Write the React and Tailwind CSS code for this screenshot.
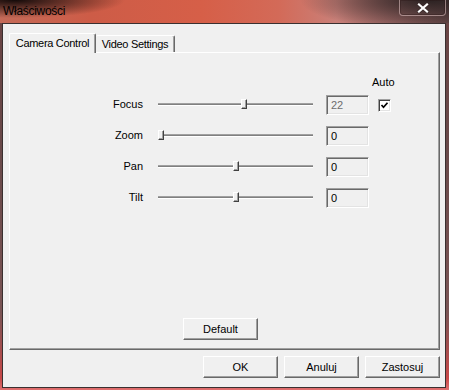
import React from "react";

function Btn({ children, className = "" }) {
  return (
    <div
      className={`h-[22px] w-[75px] flex items-center justify-center bg-[#f0f0f0] border border-t-white border-l-white border-r-[#696969] border-b-[#696969] shadow-[inset_-1px_-1px_0_#a0a0a0] text-[11px] leading-none text-black ${className}`}
    >
      {children}
    </div>
  );
}

function Slider({ thumb }) {
  return (
    <div className="relative w-[155px] h-[20px] shrink-0">
      <div className="absolute left-0 right-0 top-[8px] h-[3px] bg-[#808080] border-t border-t-[#a0a0a0] border-b border-b-white" />
      <div
        className={`absolute top-[4px] w-[6px] h-[10px] bg-[#f0f0f0] border border-t-white border-l-white border-r-[#404040] border-b-[#404040] shadow-[inset_-1px_-1px_0_#a0a0a0] ${thumb}`}
      />
    </div>
  );
}

function Field({ value, muted }) {
  return (
    <div
      className={`w-[43px] h-[20px] shrink-0 border border-t-[#a0a0a0] border-l-[#a0a0a0] border-r-white border-b-white shadow-[inset_1px_1px_0_#696969,inset_-1px_-1px_0_#e3e3e3] bg-[#f0f0f0] flex items-center pl-[4px] text-[11px] leading-none ${muted ? "text-[#6d6d6d]" : "text-black"}`}
    >
      {value}
    </div>
  );
}

function Check() {
  return (
    <div className="w-[13px] h-[13px] shrink-0 bg-white border border-t-[#a0a0a0] border-l-[#a0a0a0] border-r-white border-b-white shadow-[inset_1px_1px_0_#404040,inset_-1px_-1px_0_#e3e3e3] flex items-center justify-center">
      <svg width="9" height="9" viewBox="0 0 9 9">
        <path d="M1.5 4 L3.5 6.2 L7.5 1.8" fill="none" stroke="#000" strokeWidth="1.7" />
      </svg>
    </div>
  );
}

function Row({ label, thumb, value, muted, check }) {
  return (
    <div className="flex items-center h-[20px]">
      <div className="w-[134px] text-right text-[11px] leading-none text-black pr-[1px] -mt-[2px]">{label}</div>
      <div className="ml-[14px]">
        <Slider thumb={thumb} />
      </div>
      <div className="ml-[13px]">
        <Field value={value} muted={muted} />
      </div>
      {check ? (
        <div className="ml-[9px]">
          <Check />
        </div>
      ) : null}
    </div>
  );
}

export default function App() {
  return (
    <div className="w-[449px] h-[390px] overflow-hidden flex flex-col font-['Liberation_Sans',Arial,sans-serif] bg-[linear-gradient(180deg,#6a4444_0%,#6a4a4a_40%,#7a5555_80%,#c84848_97%,#e07070_100%)]">
      {/* title bar */}
      <div className="relative h-[23px] shrink-0 bg-[radial-gradient(110px_18px_at_15px_0px,rgba(10,5,5,0.95),rgba(10,5,5,0)),radial-gradient(130px_30px_at_430px_0px,rgba(40,32,32,0.95),rgba(40,32,32,0)),linear-gradient(90deg,#c46a58_0%,#cd5c47_20%,#d65f48_45%,#d36a58_62%,#c98079_75%,#9a6664_88%,#6a4a4a_100%)]">
        <div className="absolute left-[3px] top-[4px] text-[12px] leading-[14px] text-black tracking-[-0.3px]">
          Właściwości
        </div>
        <div className="absolute right-[3px] top-0 w-[47px] h-[16px] rounded-b-[4px] border border-t-0 border-[rgba(230,200,200,0.55)] shadow-[inset_0_0_0_1px_rgba(40,20,20,0.35)] flex items-center justify-center">
          <svg width="12" height="10" viewBox="0 0 12 10">
            <path d="M2 1.5 L10 8.5 M10 1.5 L2 8.5" stroke="#3a2a2a" strokeWidth="3.6" strokeLinecap="square" />
            <path d="M2 1.5 L10 8.5 M10 1.5 L2 8.5" stroke="#ffffff" strokeWidth="2.2" strokeLinecap="square" />
          </svg>
        </div>
      </div>

      {/* client */}
      <div className="ml-[2px] mr-[3px] mb-[2px] flex-1 border border-[#3a3030] bg-[#f0f0f0] flex flex-col pt-[9px] pl-[6px] pr-[5px]">
        {/* tabs */}
        <div className="flex items-end h-[20px] -mb-[1px]">
          <div className="relative z-10 h-[20px] w-[87px] bg-[#f0f0f0] border-t border-l border-r border-t-white border-l-white border-r-[#696969] rounded-t-[2px] shadow-[inset_-1px_0_0_#a0a0a0] flex items-center justify-center text-[11px] leading-none text-black tracking-[-0.3px] pb-[1px]">
            Camera Control
          </div>
          <div className="h-[17px] mb-[1px] w-[79px] bg-[#f0f0f0] border-t border-r border-t-white border-r-[#696969] rounded-t-[2px] shadow-[inset_-1px_0_0_#a0a0a0] flex items-center justify-center text-[11px] leading-none text-black tracking-[-0.3px]">
            Video Settings
          </div>
        </div>

        {/* panel */}
        <div className="h-[298px] border border-t-white border-l-white border-r-[#696969] border-b-[#696969] shadow-[inset_-1px_-1px_0_#a0a0a0] flex flex-col">
          <div className="flex mt-[22px] h-[14px] items-center">
            <div className="ml-[362px] text-[11px] leading-none text-black">Auto</div>
          </div>
          <div className="flex flex-col gap-[11px] mt-[6px]">
            <Row label="Focus" thumb="left-[83px]" value="22" muted check />
            <Row label="Zoom" thumb="left-[0px]" value="0" />
            <Row label="Pan" thumb="left-[75px]" value="0" />
            <Row label="Tilt" thumb="left-[75px]" value="0" />
          </div>
          <div className="mt-auto mb-[9px] ml-[173px]">
            <Btn>Default</Btn>
          </div>
        </div>

        {/* bottom buttons */}
        <div className="flex justify-end gap-[6px] mt-[6px]">
          <Btn>OK</Btn>
          <Btn>Anuluj</Btn>
          <Btn>Zastosuj</Btn>
        </div>
      </div>
    </div>
  );
}
